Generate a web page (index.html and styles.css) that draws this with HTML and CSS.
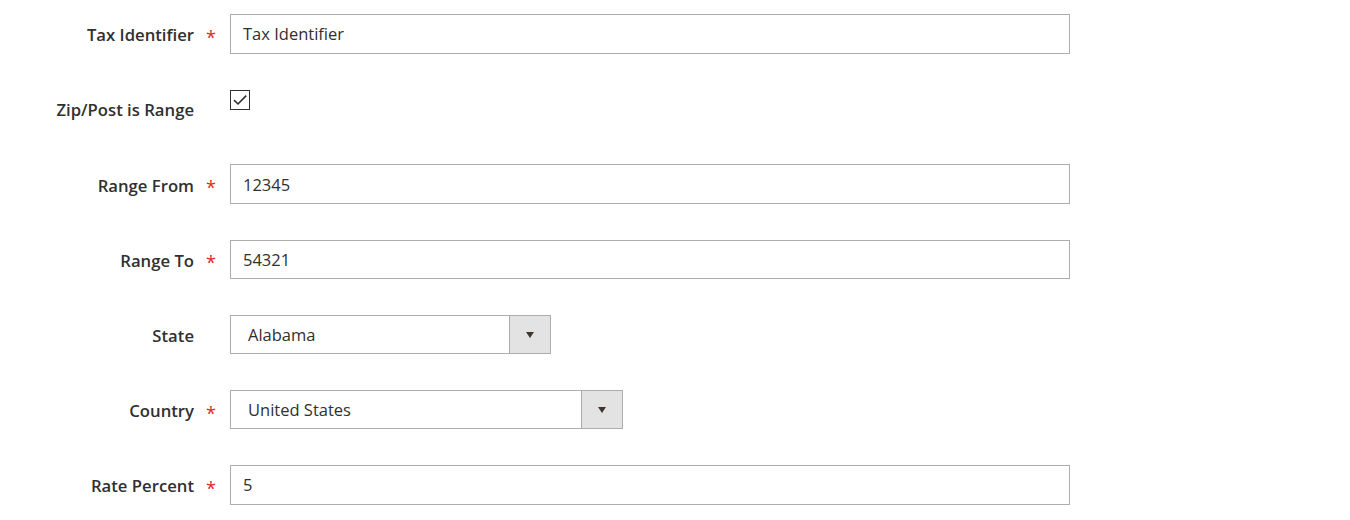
FILE: index.html
```html
<!DOCTYPE html>
<html>
<head>
<meta charset="utf-8">
<link rel="stylesheet" href="styles.css">
</head>
<body>
<form class="form">
  <div class="row">
    <label class="label">Tax Identifier</label>
    <span class="req">*</span>
    <div class="control"><input class="input" type="text" value="Tax Identifier"></div>
  </div>
  <div class="row">
    <label class="label">Zip/Post is Range</label>
    <span class="req"></span>
    <div class="control control-top">
      <span class="checkbox">
        <svg width="16" height="12" viewBox="0 0 16 12"><path d="M2 6.2 L6 10 L14.2 1.6" fill="none" stroke="#303030" stroke-width="1.6"/></svg>
      </span>
    </div>
  </div>
  <div class="row">
    <label class="label">Range From</label>
    <span class="req">*</span>
    <div class="control"><input class="input" type="text" value="12345"></div>
  </div>
  <div class="row">
    <label class="label">Range To</label>
    <span class="req">*</span>
    <div class="control"><input class="input" type="text" value="54321"></div>
  </div>
  <div class="row">
    <label class="label">State</label>
    <span class="req"></span>
    <div class="control">
      <div class="select select-state"><span class="select-text">Alabama</span><span class="select-btn"><span class="tri"></span></span></div>
    </div>
  </div>
  <div class="row">
    <label class="label">Country</label>
    <span class="req">*</span>
    <div class="control">
      <div class="select select-country"><span class="select-text">United States</span><span class="select-btn"><span class="tri"></span></span></div>
    </div>
  </div>
  <div class="row">
    <label class="label">Rate Percent</label>
    <span class="req">*</span>
    <div class="control"><input class="input" type="text" value="5"></div>
  </div>
</form>
</body>
</html>
```
FILE: styles.css
```css
html, body {
  margin: 0;
  padding: 0;
  background: #ffffff;
}
body {
  font-family: "Open Sans", "Liberation Sans", sans-serif;
  font-size: 16.6px;
  color: #303030;
}
.form {
  padding-top: 14px;
}
.row {
  display: flex;
  align-items: center;
  height: 39.6px;
  margin-bottom: 35.6px;
}
.label {
  width: 194px;
  text-align: right;
  font-weight: 600;
  font-size: 16.7px;
  color: #303030;
  white-space: nowrap;
  position: relative;
  top: 1px;
}
.req {
  width: 36px;
  box-sizing: border-box;
  padding-left: 12px;
  color: #e22626;
  font-size: 18px;
  line-height: 1;
  position: relative;
  top: 3px;
}
.control {
  display: flex;
  align-items: center;
  height: 100%;
}
.control-top {
  align-items: flex-start;
}
.input {
  box-sizing: border-box;
  width: 840px;
  height: 39.6px;
  border: 1px solid #adadad;
  border-radius: 0;
  padding: 0 12px;
  font-family: "Open Sans", "Liberation Sans", sans-serif;
  font-size: 16.5px;
  color: #303030;
  background: #fff;
  outline: none;
  margin: 0;
}
.checkbox {
  box-sizing: border-box;
  margin-top: 1px;
  width: 20px;
  height: 20px;
  border: 1px solid #303030;
  display: flex;
  align-items: center;
  justify-content: center;
  background: #fff;
}
.checkbox svg {
  display: block;
}
.select {
  box-sizing: border-box;
  display: flex;
  height: 39px;
  border: 1px solid #adadad;
  background: #fff;
}
.select-state {
  width: 321px;
}
.select-country {
  width: 393px;
}
.select-text {
  flex: 1;
  display: flex;
  align-items: center;
  padding-left: 17px;
  font-size: 16.5px;
  color: #303030;
}
.select-btn {
  width: 40px;
  border-left: 1px solid #adadad;
  background: #e3e3e3;
  display: flex;
  align-items: center;
  justify-content: center;
}
.tri {
  width: 0;
  height: 0;
  border-left: 4.5px solid transparent;
  border-right: 4.5px solid transparent;
  border-top: 6px solid #41362f;
}
```
